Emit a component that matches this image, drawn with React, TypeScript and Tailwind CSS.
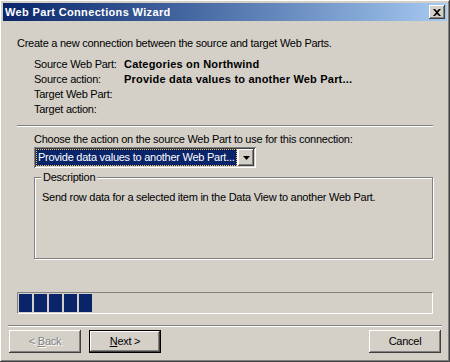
import React from 'react'

const raised =
  'bg-[#d4d0c8] shadow-[inset_-1px_-1px_#404040,inset_1px_1px_#ffffff,inset_-2px_-2px_#808080,inset_2px_2px_#d4d0c8]'

function Row({ label, value }: { label: string; value?: string }) {
  return (
    <div className="flex h-[15px] items-center">
      <div className="w-[90px] shrink-0">{label}</div>
      {value ? <div className="font-bold tracking-[0.2px]">{value}</div> : null}
    </div>
  )
}

export default function App() {
  const blocks = [0, 1, 2, 3, 4]

  return (
    <div
      className={`flex h-[362px] w-[450px] flex-col p-[3px] text-[11px] leading-[13px] tracking-[-0.25px] text-black ${raised}`}
      style={{ fontFamily: '"Liberation Sans", Arial, sans-serif' }}
    >
      {/* title bar */}
      <div className="flex h-[18px] shrink-0 items-center justify-between bg-gradient-to-r from-[#0a246a] to-[#a6caf0] pl-[2px] pr-[2px]">
        <span className="font-bold tracking-[0.35px] text-white">Web Part Connections Wizard</span>
        <button className={`flex h-[14px] w-[16px] items-center justify-center ${raised}`}>
          <svg width="8" height="7" viewBox="0 0 8 7">
            <path d="M0 0h2l2 2 2-2h2L5 3.5 8 7H6L4 5 2 7H0l3-3.5z" fill="#000" />
          </svg>
        </button>
      </div>

      <div className="flex flex-1 flex-col px-[14px]">
        <p className="mt-[16px]">Create a new connection between the source and target Web Parts.</p>

        <div className="mt-[7px] pl-[17px]">
          <Row label="Source Web Part:" value="Categories on Northwind" />
          <Row label="Source action:" value="Provide data values to another Web Part..." />
          <Row label="Target Web Part:" />
          <Row label="Target action:" />
        </div>

        <div className="mt-[8px] h-[2px] border-t border-b border-t-[#808080] border-b-white" />

        <div className="pl-[17px]">
          <p className="mt-[6px]">Choose the action on the source Web Part to use for this connection:</p>

          {/* select */}
          <div className="mt-[1px] flex h-[21px] w-[222px] items-center bg-white p-[2px] shadow-[inset_1px_1px_#808080,inset_-1px_-1px_#ffffff,inset_2px_2px_#404040,inset_-2px_-2px_#d4d0c8]">
            <div className="mr-[1px] flex h-full flex-1 items-center overflow-hidden whitespace-nowrap bg-[#0a246a] pl-[2px] text-white outline-1 outline-dotted outline-offset-[-1px] outline-[#f0c060]">
              Provide data values to another Web Part...
            </div>
            <div className={`flex h-[17px] w-[16px] shrink-0 items-center justify-center ${raised}`}>
              <svg width="7" height="4" viewBox="0 0 7 4">
                <path d="M0 0h7L3.5 4z" fill="#000" />
              </svg>
            </div>
          </div>

          {/* description group */}
          <div className="relative mt-[9px] h-[82px] border border-[#808080] shadow-[1px_1px_#ffffff,inset_1px_1px_#ffffff]">
            <span className="absolute left-[6px] top-[-7px] bg-[#d4d0c8] px-[2px]">Description</span>
            <p className="ml-[7px] mt-[13px]">Send row data for a selected item in the Data View to another Web Part.</p>
          </div>
        </div>

        {/* progress bar */}
        <div className="mt-[33px] flex h-[22px] gap-[2px] border border-t-[#808080] border-l-[#808080] border-r-white border-b-white p-[1px]">
          {blocks.map((b) => (
            <div key={b} className="h-full w-[13px] bg-[#0a246a]" />
          ))}
        </div>
      </div>

      <div className="mx-[5px] mt-[11px] h-[2px] border-t border-b border-t-[#808080] border-b-white" />

      <div className="mb-[6px] mt-[3px] flex items-center px-[6px]">
        <button className={`flex h-[23px] w-[72px] items-center justify-center text-[#808080] [text-shadow:1px_1px_#fff] ${raised}`}>
          &lt; <span className="ml-[3px] underline">B</span>ack
        </button>
        <button className="ml-[8px] flex h-[23px] w-[72px] items-center justify-center border border-black bg-[#d4d0c8] shadow-[inset_-1px_-1px_#404040,inset_1px_1px_#ffffff,inset_-2px_-2px_#808080]">
          <span className="underline">N</span>ext &gt;
        </button>
        <button className={`ml-auto flex h-[23px] w-[72px] items-center justify-center ${raised}`}>
          Cancel
        </button>
      </div>
    </div>
  )
}
